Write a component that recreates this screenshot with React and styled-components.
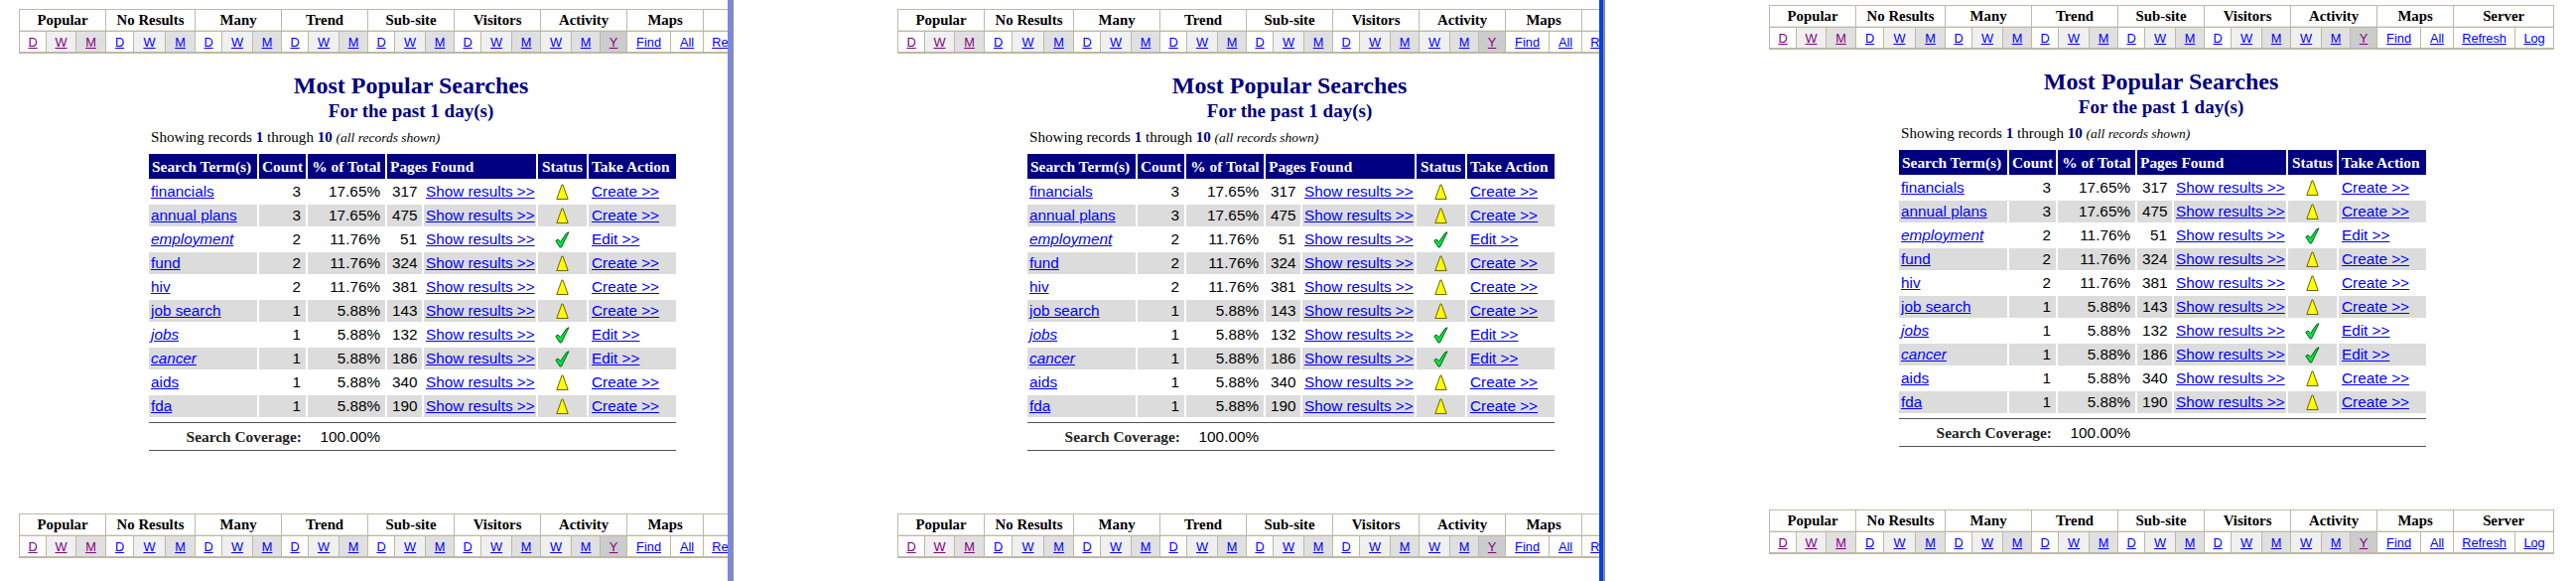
import React from 'react'
import styled, { createGlobalStyle } from 'styled-components'

const GlobalStyle = createGlobalStyle`
  html, body { margin: 0; padding: 0; background: #fff; }
  body { width: 2595px; height: 585px; overflow: hidden; font-family: "Liberation Sans", Arial, sans-serif; }
`

const navGroups = [
  { title: 'Popular', visited: true, links: [['D', 27], ['W', 30], ['M', 30]] },
  { title: 'No Results', links: [['D', 28], ['W', 32], ['M', 30]] },
  { title: 'Many', links: [['D', 27], ['W', 31], ['M', 29]] },
  { title: 'Trend', links: [['D', 27], ['W', 31], ['M', 29]] },
  { title: 'Sub-site', links: [['D', 27], ['W', 31], ['M', 29]] },
  { title: 'Visitors', links: [['D', 27], ['W', 31], ['M', 29]] },
  { title: 'Activity', links: [['W', 31], ['M', 29], ['Y', 27]] },
  { title: 'Maps', plain: true, links: [['Find', 44], ['All', 33]] },
  { title: 'Server', plain: true, links: [['Refresh', 62], ['Log', 39]] },
]

const rows = [
  ['financials', 3, '17.65%', 317, false],
  ['annual plans', 3, '17.65%', 475, false],
  ['employment', 2, '11.76%', 51, true],
  ['fund', 2, '11.76%', 324, false],
  ['hiv', 2, '11.76%', 381, false],
  ['job search', 1, '5.88%', 143, false],
  ['jobs', 1, '5.88%', 132, true],
  ['cancer', 1, '5.88%', 186, true],
  ['aids', 1, '5.88%', 340, false],
  ['fda', 1, '5.88%', 190, false],
]

const shades = { D: '#fff', W: '#f0f0f0', M: '#e0e0e0', Y: '#cccccc' }

const Page = styled.div`
  display: flex;
  width: 2595px;
  height: 585px;
  overflow: hidden;
`

const Panel = styled.div`
  flex: ${p => p.$grow ? '1 1 0' : `0 0 ${p.$width}px`};
  height: 585px;
  overflow: hidden;
  box-sizing: border-box;
  padding: ${p => `${p.$top}px 0 0 ${p.$left}px`};
`

const Divider = styled.div`
  flex: 0 0 6px;
  height: 585px;
  box-sizing: border-box;
  background: ${p => p.$color};
  border-right: ${p => p.$edge}px solid #8c8c8c;
`

const Inner = styled.div`
  width: 790px;
`

const NavTable = styled.table`
  table-layout: fixed;
  width: 790px;
  border-collapse: separate;
  border-spacing: 1px;
  background: #bdb9a8;
  border-bottom: 1px solid #bdb9a8;
`

const NavHead = styled.th`
  height: 20px;
  padding: 0;
  background: #fff;
  border-bottom: 1px solid #e8e5da;
  font: bold 14.8px "Liberation Serif", "Times New Roman", serif;
  color: #000;
  text-align: center;
`

const NavCell = styled.td`
  height: 18px;
  padding: 2px 0 0;
  background: ${p => p.$bg};
  text-align: center;
  font-size: 12.8px;
  line-height: 14px;
`

const NavLink = styled.a`
  color: ${p => p.$visited ? '#800080' : '#0000ff'};
  text-decoration: underline;
`

const Title = styled.h1`
  margin: 17px 0 0;
  text-align: center;
  font: bold 24px/30px "Liberation Serif", "Times New Roman", serif;
  color: #000080;
`

const Subtitle = styled.h2`
  margin: 0;
  text-align: center;
  font: bold 19px/22px "Liberation Serif", "Times New Roman", serif;
  color: #000080;
`

const Records = styled.p`
  margin: 6px 0 0 133px;
  font: 15.1px/18px "Liberation Serif", "Times New Roman", serif;
  color: #000;
  b { color: #000080; }
  i { font-size: 13.5px; }
`

const DataTable = styled.table`
  table-layout: fixed;
  width: 535px;
  margin: 5px 0 0 129px;
  border-collapse: separate;
  border-spacing: 2px;
`

const HeadCell = styled.th`
  height: 25px;
  padding: 0 3px;
  background: #000080;
  color: #fff;
  text-align: ${p => p.$align || 'left'};
  font: bold 15.4px "Liberation Serif", "Times New Roman", serif;
  white-space: nowrap;
  overflow: hidden;
`

const Row = styled.tr`
  background: ${p => p.$odd ? '#dcdcdc' : '#fff'};
`

const Cell = styled.td`
  height: 22px;
  padding: 0 ${p => p.$pad ?? 3}px;
  font-size: 15.3px;
  line-height: 18px;
  color: #000;
  text-align: ${p => p.$align || 'left'};
  white-space: nowrap;
  overflow: hidden;
`

const Link = styled.a`
  color: #0000ff;
  text-decoration: underline;
  font-style: ${p => p.$italic ? 'italic' : 'normal'};
`

const RuleCell = styled.td`
  height: 4px;
  padding: 0;
  box-sizing: border-box;
  ${p => p.$top ? 'border-top: 1px solid #555;' : 'border-bottom: 1px solid #555;'}
`

const CoverageLabel = styled.td`
  height: 23px;
  padding: 0 4px;
  text-align: right;
  font: bold 15.4px "Liberation Serif", "Times New Roman", serif;
  color: #222;
`

const BottomNav = styled.div`
  margin-top: ${p => p.$gap}px;
`

const Warn = () => (
  <svg width="13" height="17" viewBox="0 0 13 17" style={{ verticalAlign: 'middle' }}>
    <path d="M6 1 L7 1 L12.2 15.5 L.8 15.5 Z" fill="#ffff00" stroke="#6b6400" strokeWidth="1" />
  </svg>
)

const Check = () => (
  <svg width="15" height="17" viewBox="0 0 15 17" style={{ verticalAlign: 'middle' }}>
    <path d="M14 .8 L6.5 16 L5 16 L.8 9.5 L3 8 L5.6 10.6 L11.5 2 Z" fill="#00e63c" stroke="#0b5a1c" strokeWidth="1" strokeLinejoin="round" />
  </svg>
)

const Nav = () => (
  <NavTable>
    <colgroup>
      {navGroups.flatMap(g => g.links).map(([l, w], i) => <col key={i} style={{ width: w - 1 }} />)}
    </colgroup>
    <tbody>
      <tr>
        {navGroups.map(g => <NavHead key={g.title} colSpan={g.links.length}>{g.title}</NavHead>)}
      </tr>
      <tr>
        {navGroups.flatMap(g => g.links.map(([label]) => (
          <NavCell key={g.title + label} $bg={g.plain ? '#fff' : shades[label]}>
            <NavLink href="#" $visited={g.visited || label === 'Y'}>{label}</NavLink>
          </NavCell>
        )))}
      </tr>
    </tbody>
  </NavTable>
)

const Report = () => (
  <DataTable>
    <colgroup>
      {[109, 47, 78, 35, 113, 49, 88].map((w, i) => <col key={i} style={{ width: w }} />)}
    </colgroup>
    <thead>
      <tr>
        <HeadCell>Search Term(s)</HeadCell>
        <HeadCell $align="center">Count</HeadCell>
        <HeadCell $align="center">% of Total</HeadCell>
        <HeadCell colSpan={2}>Pages Found</HeadCell>
        <HeadCell $align="center">Status</HeadCell>
        <HeadCell>Take Action</HeadCell>
      </tr>
    </thead>
    <tbody>
      {rows.map(([term, count, pct, pages, done], i) => (
        <Row key={term} $odd={i % 2 === 1}>
          <Cell $pad={2}><Link href="#" $italic={done}>{term}</Link></Cell>
          <Cell $align="right" $pad={5}>{count}</Cell>
          <Cell $align="right" $pad={5}>{pct}</Cell>
          <Cell $align="right" $pad={5}>{pages}</Cell>
          <Cell $pad={2}><Link href="#">Show results &gt;&gt;</Link></Cell>
          <Cell $align="center">{done ? <Check /> : <Warn />}</Cell>
          <Cell><Link href="#">{done ? 'Edit >>' : 'Create >>'}</Link></Cell>
        </Row>
      ))}
      <tr><RuleCell colSpan={7} /></tr>
      <tr>
        <CoverageLabel colSpan={2}>Search Coverage:</CoverageLabel>
        <Cell $align="right" $pad={5}>100.00%</Cell>
        <Cell colSpan={4} />
      </tr>
      <tr><RuleCell colSpan={7} $top /></tr>
    </tbody>
  </DataTable>
)

const Screen = ({ width, grow, top, left, gap }) => (
  <Panel $width={width} $grow={grow} $top={top} $left={left}>
    <Inner>
      <Nav />
      <Title>Most Popular Searches</Title>
      <Subtitle>For the past 1 day(s)</Subtitle>
      <Records>Showing records <b>1</b> through <b>10</b> <i>(all records shown)</i></Records>
      <Report />
      <BottomNav $gap={gap}><Nav /></BottomNav>
    </Inner>
  </Panel>
)

export default function App() {
  return (
    <>
      <GlobalStyle />
      <Page>
        <Screen width={733} top={9} left={19} gap={58} />
        <Divider $color="#7b88dc" $edge={1} />
        <Screen width={872} top={9} left={165} gap={58} />
        <Divider $color="#0a3fe0" $edge={2} />
        <Screen grow top={5} left={165} gap={58} />
      </Page>
    </>
  )
}
